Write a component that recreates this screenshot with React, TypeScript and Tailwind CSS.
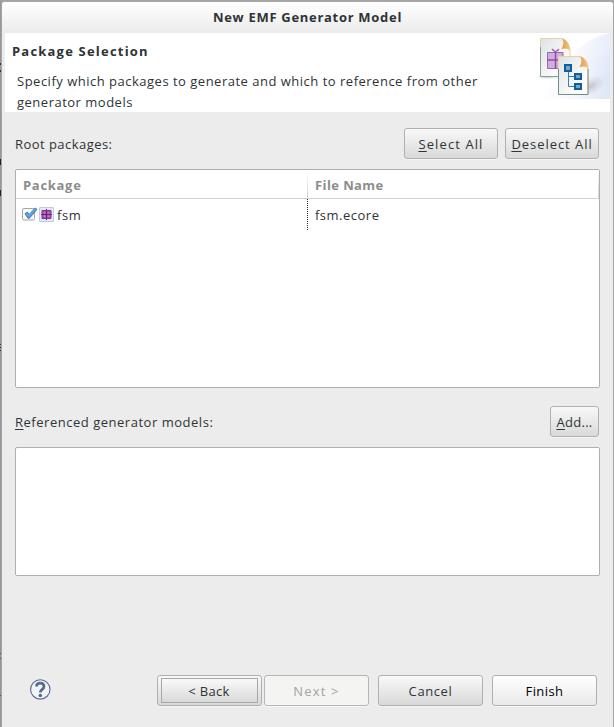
import type { ReactNode } from "react";

const raised = "bg-gradient-to-b from-[#f9f9f9] to-[#d9d9d9] border-[#afb1b0] text-[#2e3436]";

function Button({ className, children }: { className: string; children: ReactNode }) {
  return (
    <button
      className={`flex h-[31px] shrink-0 items-center justify-center whitespace-nowrap rounded-[3px] border shadow-[0_1px_0_#f6f6f6] ${className}`}
    >
      {children}
    </button>
  );
}

function WizardBanner() {
  return (
    <svg className="block" width="75" height="66" viewBox="0 0 75 66">
      <defs>
        <linearGradient id="sky" x1="0" x2="1" y1="0.3" y2="0.5">
          <stop offset="0" stopColor="#fff" stopOpacity="0" />
          <stop offset="1" stopColor="#dde5f7" stopOpacity="0.8" />
        </linearGradient>
        <linearGradient id="page" x1="0" x2="1" y1="0" y2="1">
          <stop offset="0" stopColor="#dce3e6" />
          <stop offset="0.7" stopColor="#fafbfa" />
        </linearGradient>
        <linearGradient id="fold" x1="0" x2="1">
          <stop offset="0" stopColor="#e59a3c" />
          <stop offset="1" stopColor="#efc78b" />
        </linearGradient>
        <radialGradient id="shade">
          <stop offset="0" stopColor="#a8a5ae" stopOpacity="0.6" />
          <stop offset="1" stopColor="#c8c7d4" stopOpacity="0" />
        </radialGradient>
      </defs>
      <path d="M0 66C23 52 34 7 75 0V66Z" fill="url(#sky)" />
      <path d="M30 66C38 38 53 23 75 22V66Z" fill="url(#sky)" />
      <ellipse cx="56" cy="53" rx="17" ry="9" fill="url(#shade)" transform="rotate(-28 56 53)" />
      <ellipse cx="13" cy="44" rx="14" ry="2.5" fill="url(#shade)" />
      <path d="M5.5 5.5H27C32 7 34 11 35 17V43.5H5.5Z" fill="url(#page)" stroke="#edcfa0" />
      <path d="M5.5 14V43.5H24" fill="none" stroke="#879f9b" />
      <path d="M27 5.5C32 7 35 12 35 18C33 15 30 15 26.5 16C29 12 29 8 27 5.5Z" fill="url(#fold)" />
      <g fill="#cfb0dc" stroke="#a263b7">
        <path d="M12.5 19.5H28V35.5H12.5Z" />
        <path d="M12 27H28" stroke="#8d45a6" strokeWidth="1.4" />
        <path d="M20.5 19V35.5" stroke="#8d45a6" strokeWidth="1.4" />
        <path d="M20.5 19L17 16.2M20.5 19L24 16.2" strokeWidth="1.6" />
      </g>
      <path d="M23.5 23.5H45C50 25 53 29 53 35V61.5H23.5Z" fill="url(#page)" stroke="#edcfa0" />
      <path d="M23.5 36V61.5H53V36" fill="none" stroke="#718e8b" />
      <path d="M45 23.5C50 25 53 30 53 36C51 33 48 33 44.5 34C47 30 47 26 45 23.5Z" fill="url(#fold)" />
      <path d="M33.5 38V53.5H40M33.5 43.5H40" fill="none" stroke="#397fae" />
      <g fill="#73a8cc" stroke="#115d98" strokeWidth="2">
        <path d="M30 32H36V38H30ZM40 41H46V46H40ZM40 51H46V56H40Z" />
      </g>
    </svg>
  );
}

function CheckIcon() {
  return (
    <svg width="16" height="16" viewBox="0 0 16 16">
      <rect x="0.5" y="1.5" width="12" height="11.5" rx="1.5" fill="#f8faf8" stroke="#a9aa91" />
      <path d="M3 6.7L5.2 5L7 7.5L13.2 1L15 2.3L7.4 11.3H6Z" fill="#5698db" stroke="#286bac" strokeWidth="0.8" />
      <path d="M4.3 6.7L6.7 8.9L13.5 2.1" fill="none" stroke="#8dc1f1" strokeWidth="0.7" />
    </svg>
  );
}

function PackageIcon() {
  return (
    <svg width="16" height="16" viewBox="0 0 16 16">
      <rect x="0.5" y="0.5" width="14" height="14" rx="0.5" fill="#e0e8f5" stroke="#bdcce3" />
      <path d="M3 3.5H12V11.5H3Z" fill="#a44ab0" stroke="#85388f" />
      <path d="M4.5 5H6.5V6.5H4.5ZM8.5 5H10.5V6.5H8.5ZM4.5 8.5H6.5V10H4.5ZM8.5 8.5H10.5V10H8.5Z" fill="#c47fcb" />
      <path d="M7.5 2V13M2 7.5H13" stroke="#622d73" />
    </svg>
  );
}

export default function App() {
  return (
    <main className="flex h-[727px] w-[614px] overflow-hidden bg-[#a6a6a6] font-['Open_Sans','Noto_Sans',sans-serif] text-[13px] leading-[21px] text-[#2e3436]">
      <div className="flex w-[2px] shrink-0 flex-col bg-gradient-to-r from-[#929292] to-[#aaaaaa]">
        <i className="mt-[63px] h-[2px] w-px bg-[#333]" />
        <i className="mt-[5px] h-[2px] w-px bg-[#333]" />
        <i className="mt-[87px] h-[6px] w-px bg-[#222]" />
        <i className="mt-[25px] h-[6px] w-px bg-[#222]" />
        <i className="mt-[148px] h-px w-px bg-[#333]" />
        <i className="mt-[2px] h-px w-px bg-[#333]" />
        <i className="mt-[2px] h-px w-px bg-[#333]" />
        <i className="mt-[302px] h-px w-px bg-[#555]" />
        <i className="mt-[4px] h-px w-px bg-[#555]" />
        <i className="mt-[36px] h-px w-px bg-[#555]" />
      </div>
      <section className="mt-[2px] flex w-[611px] shrink-0 flex-col rounded-t-[3px] bg-[#ececec]">
        <h1 className="h-[31px] shrink-0 rounded-t-[3px] bg-gradient-to-b from-white to-[#ebebeb] pt-[5px] text-center text-[13px] font-bold tracking-[0.7px]">
          New EMF Generator Model
        </h1>
        <header className="ml-[3px] flex h-[79px] w-[605px] shrink-0 justify-between bg-white">
          <div className="pl-[7px] pt-[8px]">
            <h2 className="text-[13px] font-bold tracking-[1.2px]">Package Selection</h2>
            <p className="whitespace-nowrap pl-[5px] pt-[9px] tracking-[0.5px]">
              Specify which packages to generate and which to reference from other
              <br />
              generator models
            </p>
          </div>
          <WizardBanner />
        </header>
        <div className="flex grow flex-col pl-[13px] pr-[13px]">
          <div className="mt-[16px] flex h-[31px] w-[584px] items-center gap-[7px]">
            <span className="grow pt-[2px] tracking-[0.45px]">Root packages:</span>
            <Button className={`w-[94px] pt-[2px] tracking-[1.1px] ${raised}`}>
              <span className="underline underline-offset-2">S</span>elect All
            </Button>
            <Button className={`w-[94px] pt-[2px] tracking-[0.95px] ${raised}`}>
              <span className="underline underline-offset-2">D</span>eselect All
            </Button>
          </div>
          <div className="mt-[10px] flex h-[219px] w-[585px] shrink-0 flex-col rounded-[2px] border border-[#aeb0af] bg-white">
            <div className="flex h-[29px] shrink-0 items-center border-b border-[#d1d2d1] font-bold text-[#8b8d8d]">
              <span className="w-[291px] pl-[7px] pt-[2px] tracking-[0.7px]">Package</span>
              <span className="h-[28px] w-px bg-gradient-to-b from-white to-[#cfd0cf]" />
              <span className="grow pl-[7px] pt-[2px] tracking-[0.4px]">File Name</span>
              <span className="h-[28px] w-px bg-gradient-to-b from-white to-[#cfd0cf]" />
            </div>
            <div className="flex h-[31px] items-center">
              <div className="flex w-[291px] items-center pl-[6px]">
                <CheckIcon />
                <span className="ml-px"><PackageIcon /></span>
                <span className="pl-[2px] pt-[2px] tracking-[0.6px]">fsm</span>
              </div>
              <span className="h-[31px] w-px bg-[repeating-linear-gradient(to_bottom,#333_0_1px,transparent_1px_2px)]" />
              <span className="pl-[7px] pt-[2px] tracking-[0.5px]">fsm.ecore</span>
            </div>
          </div>
          <div className="mt-[18px] flex h-[31px] w-[584px] shrink-0 items-center justify-between">
            <span className="pt-[2px] tracking-[0.52px]">
              <span className="underline underline-offset-2">R</span>eferenced generator models:
            </span>
            <Button className={`w-[49px] pt-[2px] tracking-[0.3px] ${raised}`}>
              <span className="underline underline-offset-2">A</span>dd...
            </Button>
          </div>
          <div className="mt-[10px] h-[129px] w-[585px] shrink-0 rounded-[2px] border border-[#aeb0af] bg-white" />
          <footer className="mt-[99px] flex h-[31px] shrink-0 items-center pl-[15px]">
            <svg width="21" height="21" viewBox="0 0 21 21" className="mb-[3px] mr-[106px] shrink-0">
              <circle cx="10.3" cy="10.4" r="9.7" fill="#f3f4f5" stroke="#586b90" strokeWidth="1.1" />
              <path d="M6.5 7.5C6.6 3 14 3.2 14 7.5C14 10.5 10.3 10.2 10.3 13.5" fill="none" stroke="#586b90" strokeWidth="2.7" />
              <circle cx="10.3" cy="16.5" r="1.8" fill="#586b90" />
            </svg>
            <Button className={`w-[105px] p-[2px] tracking-[0.3px] ${raised}`}>
              <span className="flex h-[25px] w-[97px] shrink-0 items-center justify-center border border-[#a6a8a7] bg-gradient-to-b from-[#f9f9f9] to-[#dadada] pr-px pt-[2px]">
                &lt; Back
              </span>
            </Button>
            <Button className="ml-[2px] w-[105px] border-[#b5b7b6] bg-[#f4f4f3] pt-[2px] tracking-[1.2px] text-[#a1a4a4]">
              Next &gt;
            </Button>
            <Button className={`ml-[9px] w-[105px] pt-[2px] tracking-[0.6px] ${raised}`}>Cancel</Button>
            <Button className="ml-[9px] w-[105px] border-[#afb1b0] bg-gradient-to-b from-white to-[#e9e9e9] pt-[2px] tracking-[0.4px] text-black">
              Finish
            </Button>
          </footer>
        </div>
      </section>
      <div className="w-px bg-[#a6a6a6]" />
    </main>
  );
}
